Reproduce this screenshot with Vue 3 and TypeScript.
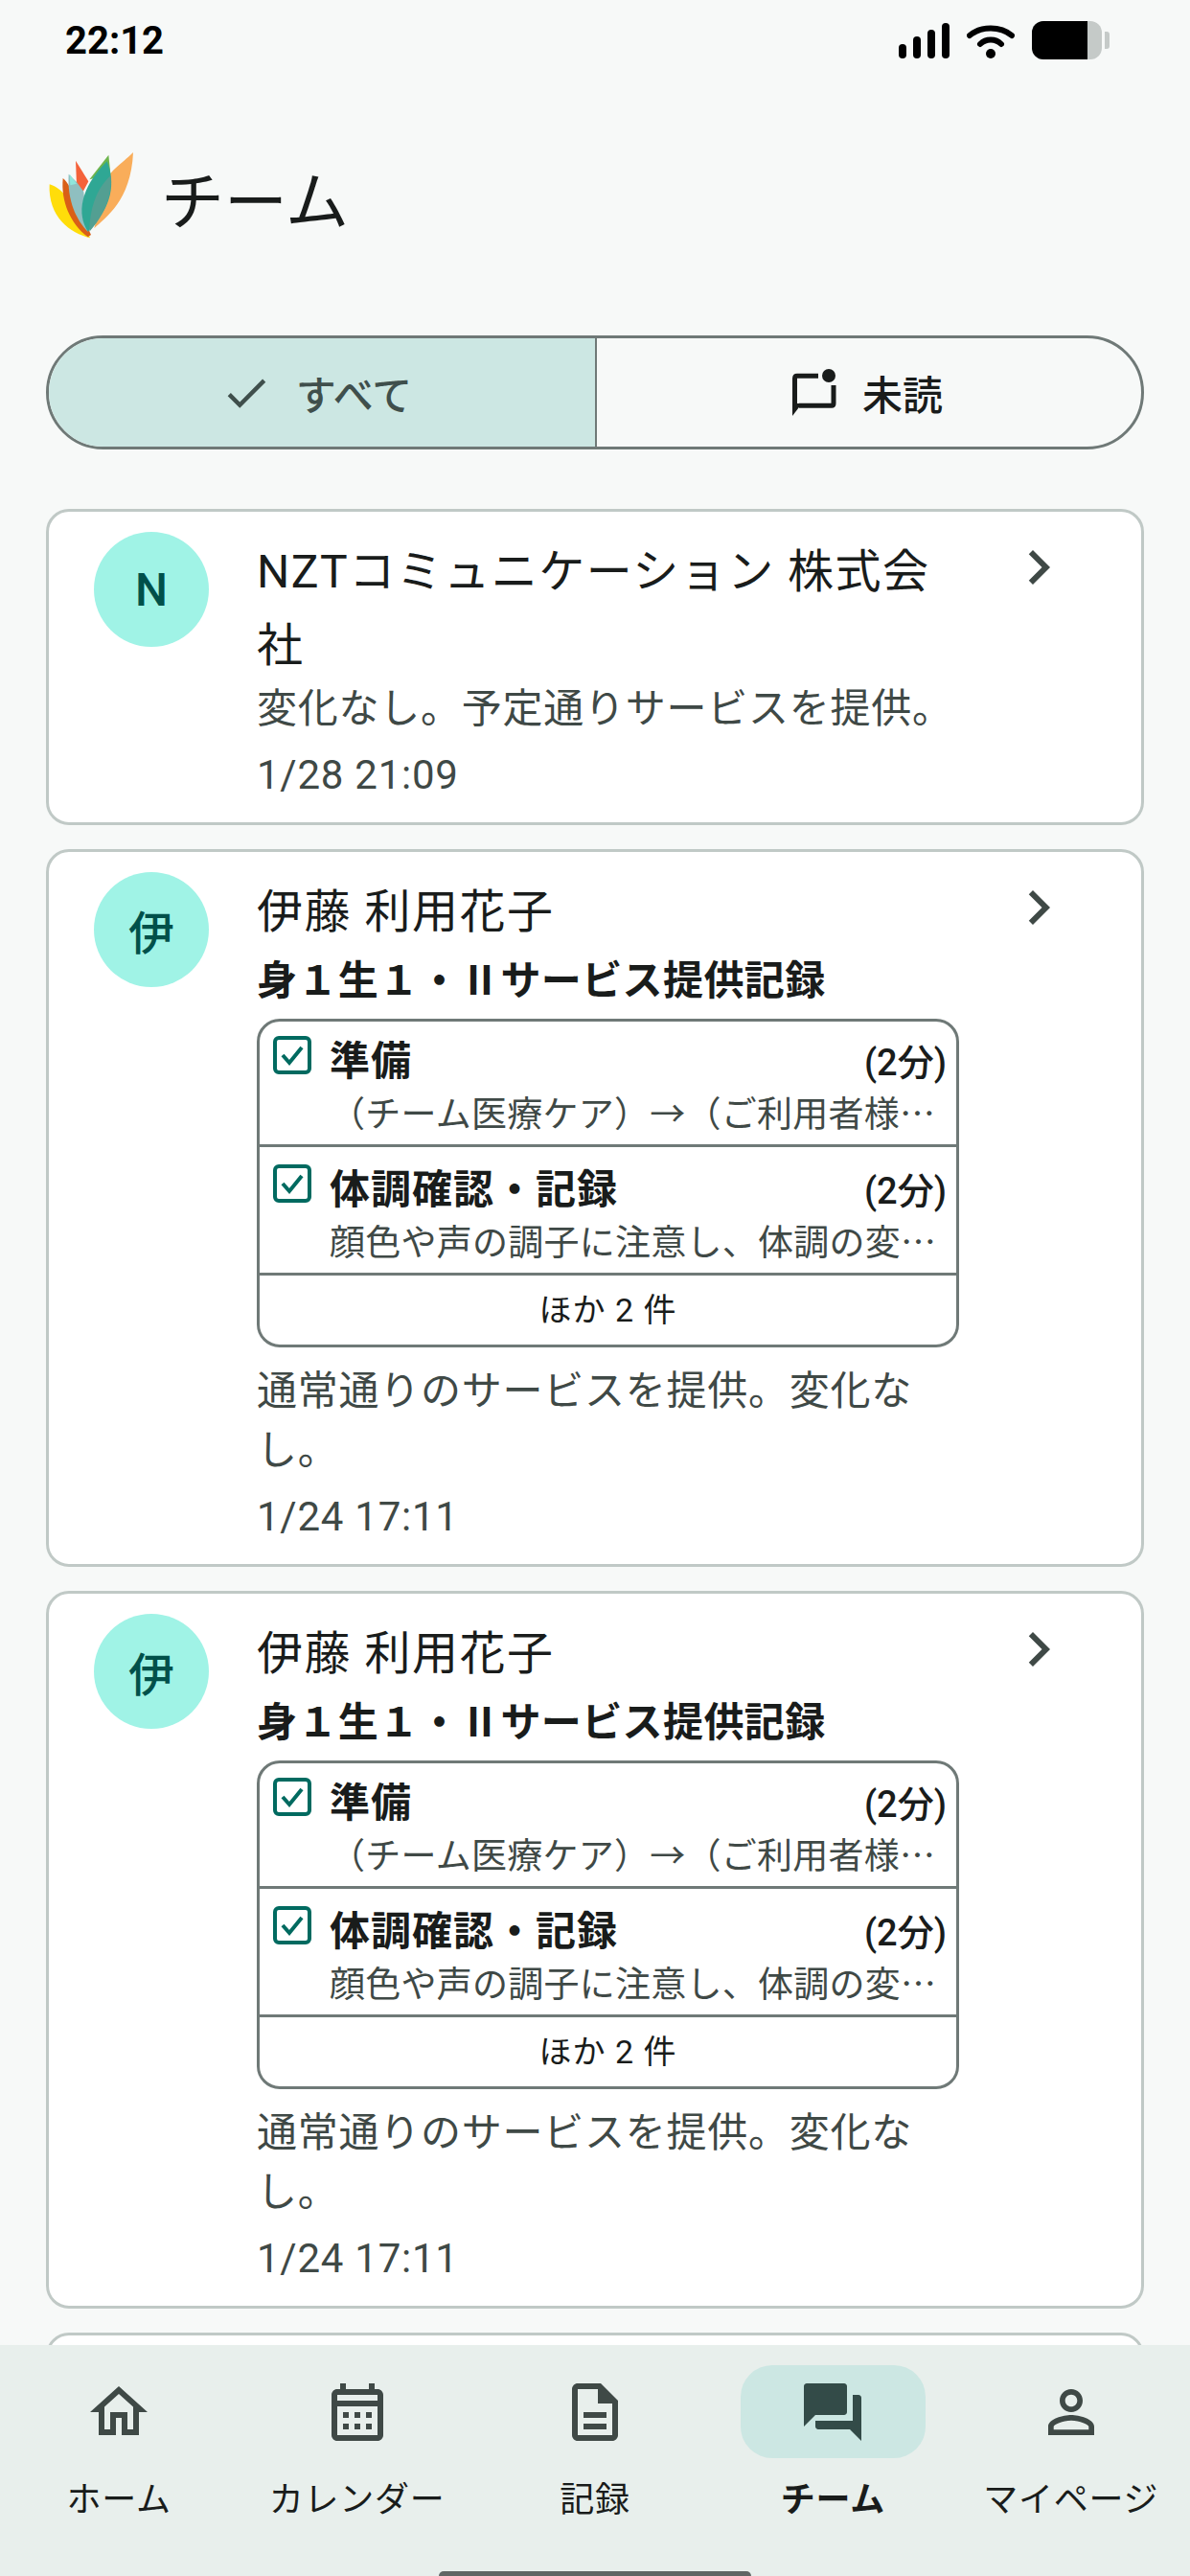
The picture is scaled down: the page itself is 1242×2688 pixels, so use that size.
<script setup lang="ts">
interface TaskRow {
  title: string
  minutes: string
  detail: string
}

interface Post {
  id: number
  initial: string
  name: string
  service?: string
  tasks?: TaskRow[]
  more?: string
  body: string
  date: string
}

const tasks: TaskRow[] = [
  { title: '準備', minutes: '(2分)', detail: '（チーム医療ケア）→（ご利用者様…' },
  { title: '体調確認・記録', minutes: '(2分)', detail: '顔色や声の調子に注意し、体調の変…' }
]

const posts: Post[] = [
  {
    id: 1,
    initial: 'N',
    name: 'NZTコミュニケーション 株式会社',
    body: '変化なし。予定通りサービスを提供。',
    date: '1/28 21:09'
  },
  {
    id: 2,
    initial: '伊',
    name: '伊藤 利用花子',
    service: '身１生１・Ⅱサービス提供記録',
    tasks,
    more: 'ほか 2 件',
    body: '通常通りのサービスを提供。変化なし。',
    date: '1/24 17:11'
  },
  {
    id: 3,
    initial: '伊',
    name: '伊藤 利用花子',
    service: '身１生１・Ⅱサービス提供記録',
    tasks,
    more: 'ほか 2 件',
    body: '通常通りのサービスを提供。変化なし。',
    date: '1/24 17:11'
  },
  {
    id: 4,
    initial: '',
    name: '',
    body: '',
    date: ''
  }
]

const navItems = [
  {
    label: 'ホーム',
    path: 'M12 5.69l5 4.5V18h-2v-6H9v6H7v-7.81l5-4.5M12 3L2 12h3v8h6v-6h2v6h6v-8h3L12 3z'
  },
  {
    label: 'カレンダー',
    path: 'M19 4h-1V2h-2v2H8V2H6v2H5c-1.11 0-1.99.9-1.99 2L3 20c0 1.1.89 2 2 2h14c1.1 0 2-.9 2-2V6c0-1.1-.9-2-2-2zm0 16H5V10h14v10zm0-12H5V6h14v2zM9 14H7v-2h2v2zm4 0h-2v-2h2v2zm4 0h-2v-2h2v2zm-8 4H7v-2h2v2zm4 0h-2v-2h2v2zm4 0h-2v-2h2v2z'
  },
  {
    label: '記録',
    path: 'M8 16h8v2H8zm0-4h8v2H8zm6-10H6c-1.1 0-2 .9-2 2v16c0 1.1.89 2 1.99 2H18c1.1 0 2-.9 2-2V8l-6-6zm4 18H6V4h7v5h5v11z'
  },
  {
    label: 'チーム',
    active: true,
    path: 'M21 6h-2v9H6v2c0 .55.45 1 1 1h11l4 4V7c0-.55-.45-1-1-1zm-4 6V3c0-.55-.45-1-1-1H3c-.55 0-1 .45-1 1v14l4-4h10c.55 0 1-.45 1-1z'
  },
  {
    label: 'マイページ',
    path: 'M12 5.9c1.16 0 2.1.94 2.1 2.1s-.94 2.1-2.1 2.1S9.9 9.16 9.9 8s.94-2.1 2.1-2.1m0 9c2.97 0 6.1 1.46 6.1 2.1v1.1H5.9V17c0-.64 3.13-2.1 6.1-2.1M12 4C9.79 4 8 5.79 8 8s1.79 4 4 4 4-1.79 4-4-1.79-4-4-4zm0 9c-2.67 0-8 1.34-8 4v3h16v-3c0-2.66-5.33-4-8-4z'
  }
]
</script>

<template>
  <div class="screen">
    <div class="status-bar">
      <span class="clock">22:12</span>
      <div class="status-icons">
        <div class="signal">
          <i class="bar-1"></i>
          <i class="bar-2"></i>
          <i class="bar-3"></i>
          <i class="bar-4"></i>
        </div>
        <svg class="wifi" width="50" height="37" viewBox="0 0 50 37">
          <path d="M3 13 C15 3 35 3 47 13" fill="none" stroke="#000" stroke-width="6" stroke-linecap="round" />
          <path d="M14 22 C20 16 30 16 36 22" fill="none" stroke="#000" stroke-width="6" stroke-linecap="round" />
          <circle cx="25" cy="32" r="5" fill="#000" />
        </svg>
        <div class="battery">
          <div class="battery-level"></div>
        </div>
        <div class="battery-nub"></div>
      </div>
    </div>

    <header class="page-header">
      <svg class="logo" width="130" height="130" viewBox="0 0 390 390">
        <path d="M205 325 C240 290 320 240 327 87 C290 125 245 145 235 200 Z" fill="#f9ad5a" />
        <path d="M65 187 C110 200 150 260 192 355 C130 340 60 290 65 187 Z" fill="#ffdd0a" />
        <path d="M107 168 C135 190 160 270 195 345 L185 352 C130 310 100 240 107 168 Z" fill="#d95f17" />
        <path d="M147 113 L187 178 L170 210 L150 190 Z" fill="#f4623a" />
        <path d="M125 155 L150 180 L172 210 L185 335 C150 300 120 240 125 155 Z" fill="#8fbfc0" />
        <path d="M128 155 L150 185 L130 190 Z" fill="#8fe6dc" />
        <path d="M250 95 L256 155 L190 172 Z" fill="#6db54d" />
        <path d="M245 115 C272 180 262 260 185 335 C150 280 160 200 245 115 Z" fill="#2fa794" />
        <path d="M257 160 C262 230 230 290 190 335 C190 270 210 200 257 160 Z" fill="#539f92" />
      </svg>
      <h1 class="page-title">チーム</h1>
    </header>

    <div class="segments">
      <button class="segment selected">
        <svg width="54" height="54" viewBox="0 0 24 24"><path d="M9 16.17L4.83 12l-1.42 1.41L9 19 21 7l-1.41-1.41z" /></svg>
        <span>すべて</span>
      </button>
      <button class="segment">
        <svg width="54" height="54" viewBox="0 0 54 54">
          <path d="M33 9.3 H11 Q8.5 9.3 8.5 12 V44" fill="none" stroke="currentColor" stroke-width="5" />
          <path d="M49 19 V38 Q49 40.3 47 40.3 H13" fill="none" stroke="currentColor" stroke-width="5" />
          <path d="M6 51 V38 H16 Z" />
          <circle cx="44" cy="9" r="7" />
        </svg>
        <span>未読</span>
      </button>
    </div>

    <main class="feed">
      <article v-for="post in posts" :key="post.id" class="card">
        <div v-if="post.initial" class="avatar">{{ post.initial }}</div>
        <div class="card-body">
          <div class="name">{{ post.name }}</div>
          <div v-if="post.service" class="service">{{ post.service }}</div>
          <div v-if="post.tasks" class="task-box">
            <div v-for="task in post.tasks" :key="task.title" class="task">
              <svg class="check" width="40" height="40" viewBox="0 0 40 40">
                <rect x="2" y="2" width="36" height="36" rx="4" fill="none" stroke="#006a60" stroke-width="4" />
                <path d="M10 20 L17 28 L30 12" fill="none" stroke="#006a60" stroke-width="4" />
              </svg>
              <div class="task-text">
                <div class="task-head">
                  <span class="task-title">{{ task.title }}</span>
                  <span class="task-min">{{ task.minutes }}</span>
                </div>
                <div class="task-detail">{{ task.detail }}</div>
              </div>
            </div>
            <div class="task-more">{{ post.more }}</div>
          </div>
          <p v-if="post.body" class="body-text">{{ post.body }}</p>
          <div v-if="post.date" class="date">{{ post.date }}</div>
        </div>
        <svg class="chevron" width="72" height="72" viewBox="0 0 24 24"><path d="M10 6L8.59 7.41 13.17 12l-4.58 4.59L10 18l6-6z" /></svg>
      </article>
    </main>

    <nav class="bottom-nav">
      <div class="nav-items">
        <div v-for="item in navItems" :key="item.label" class="nav-item" :class="{ active: item.active }">
          <div class="nav-icon">
            <svg width="72" height="72" viewBox="0 0 24 24"><path :d="item.path" /></svg>
          </div>
          <span class="nav-label">{{ item.label }}</span>
        </div>
      </div>
      <div class="home-bar"></div>
    </nav>
  </div>
</template>

<style scoped>
.screen {
  width: 1242px;
  height: 2688px;
  display: flex;
  flex-direction: column;
  overflow: hidden;
  background: #f7f9f8;
  color: #191c1b;
  font-family: Roboto, 'Noto Sans CJK JP', sans-serif;
}

.status-bar {
  flex: none;
  height: 80px;
  box-sizing: border-box;
  padding: 4px 84px 0 68px;
  display: flex;
  align-items: center;
  justify-content: space-between;
}

.clock {
  font-size: 40px;
  font-weight: 700;
  color: #000;
}

.status-icons {
  display: flex;
  align-items: center;
}

.signal {
  display: flex;
  align-items: flex-end;
  gap: 7px;
  margin-right: 18px;
}

.signal i {
  display: block;
  width: 8px;
  border-radius: 4px;
  background: #000;
}

.bar-1 { height: 15px; }
.bar-2 { height: 23px; }
.bar-3 { height: 30px; }
.bar-4 { height: 37px; }

.wifi {
  margin-right: 18px;
}

.battery {
  width: 73px;
  height: 40px;
  border-radius: 12px;
  overflow: hidden;
  background: #c5cac8;
}

.battery-level {
  width: 58px;
  height: 100%;
  background: #000;
}

.battery-nub {
  width: 5px;
  height: 18px;
  margin-left: 3px;
  border-radius: 0 3px 3px 0;
  background: #c5cac8;
}

.page-header {
  flex: none;
  height: 270px;
  padding-left: 30px;
  padding-bottom: 6px;
  box-sizing: border-box;
  display: flex;
  align-items: center;
}

.logo {
  flex: none;
  margin-bottom: 34px;
}

.page-title {
  margin: 0 0 0 8px;
  font-size: 66px;
  font-weight: 400;
  line-height: 88px;
}

.segments {
  flex: none;
  height: 119px;
  margin: 0 48px 62px;
  box-sizing: border-box;
  border: 3px solid #6f7977;
  border-radius: 60px;
  overflow: hidden;
  display: flex;
}

.segment {
  flex: none;
  width: 50%;
  padding: 0 9px 0 0;
  border: 0;
  background: transparent;
  font: inherit;
  font-size: 42px;
  font-weight: 500;
  color: #191c1b;
  display: flex;
  align-items: center;
  justify-content: center;
  gap: 25px;
}

.segment + .segment {
  border-left: 2px solid #6f7977;
}

.segment.selected {
  padding-right: 12px;
  background: #cce7e3;
  color: #3f4f4c;
}

.segment svg {
  fill: currentColor;
}

.feed {
  flex: 1;
  min-height: 0;
  overflow: hidden;
  margin: 0 48px;
  display: flex;
  flex-direction: column;
  gap: 25px;
}

.card {
  flex: none;
  box-sizing: border-box;
  padding: 24px 71px 19px 47px;
  border: 3px solid #c0c9c6;
  border-radius: 24px;
  background: #fff;
  display: flex;
  align-items: flex-start;
}

.avatar {
  flex: none;
  width: 120px;
  height: 120px;
  margin: -3px 50px 0 0;
  border-radius: 50%;
  background: #a0f3e6;
  color: #00504a;
  font-size: 48px;
  font-weight: 500;
  display: flex;
  align-items: center;
  justify-content: center;
}

.card-body {
  flex: none;
  width: 733px;
  margin-right: 47px;
}

.name {
  font-size: 48px;
  line-height: 77px;
  letter-spacing: 1.5px;
}

.service {
  margin-top: 1px;
  font-size: 42px;
  font-weight: 700;
  line-height: 66px;
  letter-spacing: 0.4px;
}

.task-box {
  margin: 6px 0 18px;
  border: 3px solid #6f7977;
  border-radius: 24px;
  overflow: hidden;
}

.task {
  height: 131px;
  box-sizing: border-box;
  padding: 15px 10px 0 14px;
  border-bottom: 3px solid #6f7977;
  display: flex;
  align-items: flex-start;
  gap: 19px;
}

.task + .task {
  height: 134px;
  padding-top: 18px;
}

.check {
  flex: none;
}

.task-text {
  flex: 1;
  min-width: 0;
}

.task-head {
  display: flex;
  align-items: baseline;
  justify-content: space-between;
  line-height: 53px;
}

.task-title {
  font-size: 42px;
  font-weight: 700;
  letter-spacing: 1px;
}

.task-min {
  font-size: 38px;
  font-weight: 500;
}

.task-detail {
  font-family: 'Noto Sans CJK JP', sans-serif;
  font-size: 37px;
  line-height: 48px;
  letter-spacing: 0.25px;
  white-space: nowrap;
  color: #3f4946;
}

.task-more {
  height: 72px;
  font-size: 34px;
  line-height: 72px;
  letter-spacing: 1px;
  text-align: center;
}

.body-text {
  margin: -3px 0 0;
  font-size: 42px;
  line-height: 62px;
  letter-spacing: 0.75px;
  color: #3f4946;
}

.date {
  margin-top: 8px;
  font-size: 42px;
  line-height: 60px;
  letter-spacing: 0.75px;
  color: #3f4946;
}

.chevron {
  flex: none;
  margin-top: -2px;
  fill: #3f4946;
}

.bottom-nav {
  flex: none;
  height: 241px;
  background: #e8efec;
  position: relative;
}

.nav-items {
  display: flex;
  padding-top: 21px;
}

.nav-item {
  flex: 1;
  display: flex;
  flex-direction: column;
  align-items: center;
}

.nav-icon {
  width: 193px;
  height: 97px;
  border-radius: 33px;
  display: flex;
  align-items: center;
  justify-content: center;
}

.nav-icon svg {
  fill: #3f4946;
}

.nav-item.active .nav-icon {
  background: #cce7e3;
}

.nav-item.active .nav-icon svg {
  fill: #334b48;
}

.nav-label {
  margin-top: 19px;
  font-size: 36px;
  line-height: 50px;
  letter-spacing: 0.75px;
  white-space: nowrap;
  color: #191c1b;
}

.nav-item.active .nav-label {
  font-weight: 700;
}

.home-bar {
  position: absolute;
  left: 458px;
  bottom: 0;
  width: 326px;
  height: 5px;
  border-radius: 6px 6px 0 0;
  background: #5f6664;
}
</style>
